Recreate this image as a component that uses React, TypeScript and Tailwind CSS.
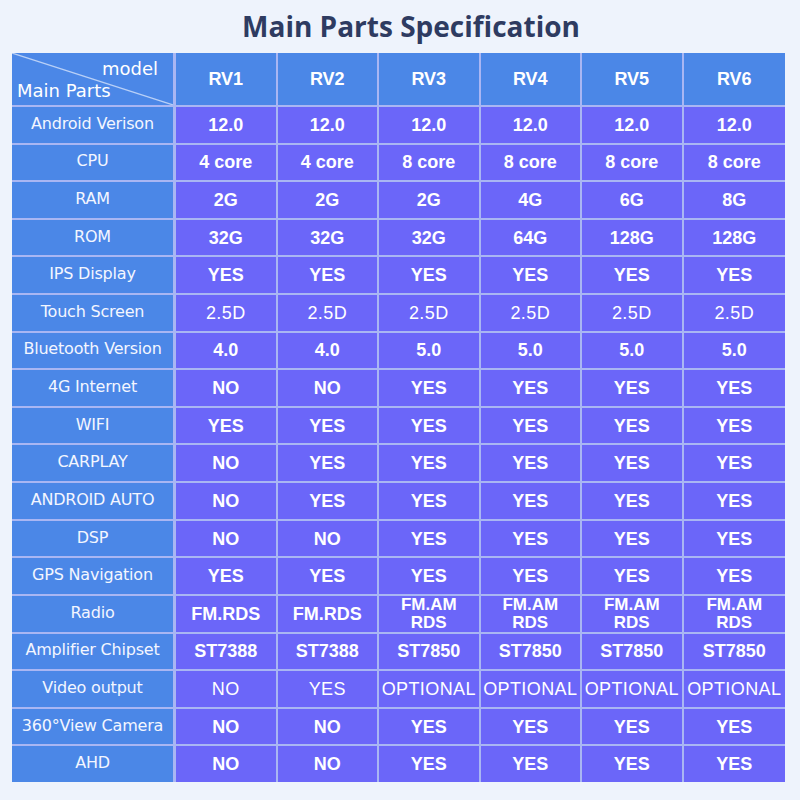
import React from "react";

type Row = { label: string; values: string[]; light?: boolean };

const rows: Row[] = [
  { label: "Android Verison", values: ["12.0", "12.0", "12.0", "12.0", "12.0", "12.0"] },
  { label: "CPU", values: ["4 core", "4 core", "8 core", "8 core", "8 core", "8 core"] },
  { label: "RAM", values: ["2G", "2G", "2G", "4G", "6G", "8G"] },
  { label: "ROM", values: ["32G", "32G", "32G", "64G", "128G", "128G"] },
  { label: "IPS Display", values: ["YES", "YES", "YES", "YES", "YES", "YES"] },
  { label: "Touch Screen", values: ["2.5D", "2.5D", "2.5D", "2.5D", "2.5D", "2.5D"], light: true },
  { label: "Bluetooth Version", values: ["4.0", "4.0", "5.0", "5.0", "5.0", "5.0"] },
  { label: "4G Internet", values: ["NO", "NO", "YES", "YES", "YES", "YES"] },
  { label: "WIFI", values: ["YES", "YES", "YES", "YES", "YES", "YES"] },
  { label: "CARPLAY", values: ["NO", "YES", "YES", "YES", "YES", "YES"] },
  { label: "ANDROID AUTO", values: ["NO", "YES", "YES", "YES", "YES", "YES"] },
  { label: "DSP", values: ["NO", "NO", "YES", "YES", "YES", "YES"] },
  { label: "GPS Navigation", values: ["YES", "YES", "YES", "YES", "YES", "YES"] },
  { label: "Radio", values: ["FM.RDS", "FM.RDS", "FM.AM\nRDS", "FM.AM\nRDS", "FM.AM\nRDS", "FM.AM\nRDS"] },
  { label: "Amplifier Chipset", values: ["ST7388", "ST7388", "ST7850", "ST7850", "ST7850", "ST7850"] },
  { label: "Video output", values: ["NO", "YES", "OPTIONAL", "OPTIONAL", "OPTIONAL", "OPTIONAL"], light: true },
  { label: "360°View Camera", values: ["NO", "NO", "YES", "YES", "YES", "YES"] },
  { label: "AHD", values: ["NO", "NO", "YES", "YES", "YES", "YES"] },
];

const models = ["RV1", "RV2", "RV3", "RV4", "RV5", "RV6"];

export default function App() {
  return (
    <div className="w-[800px] h-[800px] bg-[#eef3fc] flex flex-col items-center overflow-hidden">
      <h1
        className="h-[53px] flex items-center justify-center text-[28px] font-bold text-[#2e3b61] pb-[2px] pl-[22px]"
        style={{ fontFamily: '"Open Sans", "Noto Sans", sans-serif' }}
      >
        Main Parts Specification
      </h1>
      <div
        className="ml-[-3px] w-[773px] h-[729px] bg-[#a9b6f3] grid gap-y-[2px]"
        style={{
          gridTemplateColumns: "161px 3px repeat(6, minmax(0, 1fr))",
          gridTemplateRows: "52px repeat(18, minmax(0, 1fr))",
          columnGap: "0px",
        }}
      >
        <div
          className="relative bg-[#4b87e7] text-white text-[18px] leading-none"
          style={{ fontFamily: '"DejaVu Sans", sans-serif' }}
        >
          <svg className="absolute inset-0 w-full h-full" viewBox="0 0 161 52" preserveAspectRatio="none">
            <line x1="0" y1="0" x2="161" y2="52" stroke="#b9d0f7" strokeWidth="1.2" />
          </svg>
          <span className="absolute right-[15px] top-[7px]">model</span>
          <span className="absolute left-[5px] bottom-[5px]">Main Parts</span>
        </div>
        <div className="bg-[#a9b6f3]" />
        {models.map((m, i) => (
          <div
            key={m}
            className={`bg-[#4b87e7] text-white font-bold text-[18px] flex items-center justify-center ${i < 5 ? "mr-[2px]" : ""}`}
            style={{ fontFamily: '"Liberation Sans", Arial, sans-serif' }}
          >
            {m}
          </div>
        ))}
        {rows.map((r) => (
          <React.Fragment key={r.label}>
            <div
              className="bg-[#4b87e7] text-[#f3f6ff] text-[16px] flex items-center justify-center whitespace-nowrap pb-[2px]"
              style={{ fontFamily: '"DejaVu Sans", sans-serif', letterSpacing: "-0.2px" }}
            >
              {r.label}
            </div>
            <div className="bg-[#a9b6f3]" />
            {r.values.map((v, i) => (
              <div
                key={i}
                className={`bg-[#6b66f9] text-white flex flex-col items-center justify-center whitespace-nowrap text-center ${i < 5 ? "mr-[2px]" : ""} ${
                  r.light ? "font-normal text-[18px] tracking-[0.4px]" : v.includes("\n") ? "font-bold text-[17px]" : "font-bold text-[18px]"
                }`}
                style={{ fontFamily: '"Liberation Sans", Arial, sans-serif' }}
              >
                {v.split("\n").map((line, k) => (
                  <span key={k} className={v.includes("\n") ? "leading-[18px]" : "leading-none"}>
                    {line}
                  </span>
                ))}
              </div>
            ))}
          </React.Fragment>
        ))}
      </div>
    </div>
  );
}
